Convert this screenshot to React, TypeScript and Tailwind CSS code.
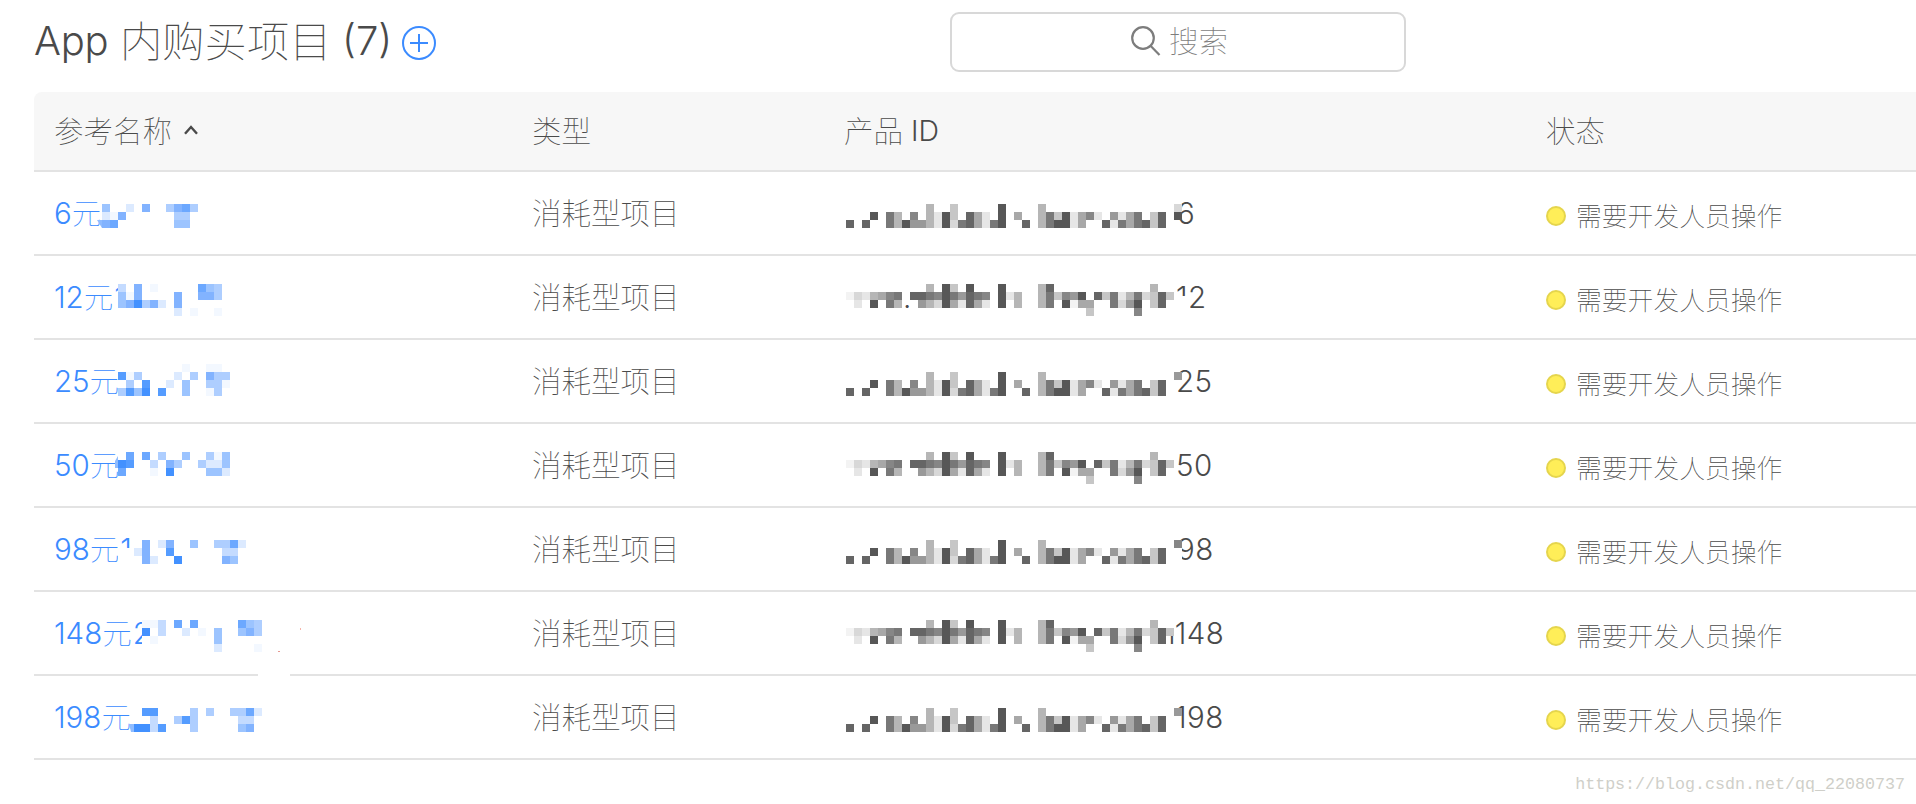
import clsx from "clsx";

const CELL = 8;

// "." leaves a hole, "w" paints white over whatever sits underneath
const GRAYS: Record<string, string> = {
  "5": "#575757", "6": "#656565", "7": "#787878", "8": "#868686", "9": "#999999",
  a: "#a8a8a8", b: "#b6b6b6", c: "#c6c6c6", d: "#d8d8d8", e: "#e6e6e6", f: "#f3f3f3", w: "#ffffff",
};

const BLUES: Record<string, string> = {
  "1": "#f3f8ff", "2": "#dceaff", "3": "#c4dbff", "4": "#aeceff", "5": "#9cc4ff",
  "6": "#82b3ff", "7": "#6ca8ff", "8": "#559cff", "9": "#4391ff", w: "#ffffff",
};

interface MosaicProps {
  rows: string[];
  palette: Record<string, string>;
  x: number;
  y: number;
  sliver?: string;
}

function Mosaic({ rows, palette, x, y, sliver }: MosaicProps) {
  const cols = Math.max(...rows.map((r) => r.length));
  return (
    <svg
      className="absolute overflow-visible"
      style={{ left: x, top: y }}
      width={cols * CELL}
      height={rows.length * CELL}
      shapeRendering="crispEdges"
      aria-hidden
    >
      {sliver && <path d={sliver} fill="#8fbcff" shapeRendering="auto" />}
      {rows.flatMap((row, r) =>
        [...row].map((c, i) =>
          palette[c] ? (
            <rect key={`${r}-${i}`} x={i * CELL} y={r * CELL} width={CELL} height={CELL} fill={palette[c]} />
          ) : null,
        ),
      )}
    </svg>
  );
}

const idOdd = [
  "..........b..c.....5....b................",
  "...5.7b.8.be5c.6ae.5.a..b7c5ea8e.9ea7.c6.",
  "6.6..7b599be5d76ae75..6.b755ea..6e7a76c6.",
];

const idEven = [
  "..........b.5c.5...5....b6............b",
  "fdeba87.6678579678.5eb..b7c895.6c7eb7dc6c",
  ".e.5.7b..9bd5ae6ae.5.b..b7.5faa..7d95.c6",
  "..............................c.....8",
];

interface Product {
  amount: string;
  tail?: string;
  nameX: number;
  nameY: number;
  name: string[];
  sliver?: string;
  suffix: string;
  suffixX: number;
  idEnd: string[];
}

const products: Product[] = [
  {
    amount: "6", nameX: 48, nameY: 32,
    name: ["5..2.6..4674", "216......44", "67.......55"], sliver: "M-5 16H0v8z",
    suffix: "6", suffixX: 333, idEnd: ["d", "5", "."],
  },
  {
    amount: "12", tail: "1", nameX: 64, nameY: 28,
    name: ["3w6.1.....754", "516....6..664", "569462.6", ".......2.1..1"],
    suffix: "12", suffixX: 332, idEnd: [".", "ww", "ww"],
  },
  {
    amount: "25", nameX: 64, nameY: 24,
    name: ["........1..11", "814....2.4.644", ".4.8..2.5..441", "4859.8..5..14"],
    suffix: "25", suffixX: 332, idEnd: ["9", ".", "."],
  },
  {
    amount: "50", nameX: 64, nameY: 28,
    name: [".7.7.4..5..415", "98..3.64..4225", "7...1.9....552"], sliver: "M-3 9L0 4v12h-3z",
    suffix: "50", suffixX: 332, idEnd: [],
  },
  {
    amount: "98", tail: "1", nameX: 64, nameY: 32,
    name: ["..w6.26..5..4472", ".w26..8......33", "ww.62..9.....65"],
    suffix: "98", suffixX: 333, idEnd: ["8", "w", "w"],
  },
  {
    amount: "148", tail: "2", nameX: 88, nameY: 28,
    name: ["113.7.7.....754", "9w3..2.1.5..564", "w1.......5", ".........2....1"],
    suffix: "n148", suffixX: 314, idEnd: [],
  },
  {
    amount: "198", nameX: 80, nameY: 32,
    name: [".88....4.4..4472", "..3..484.....33", "9938...4.....56"], sliver: "M-5 16H0v8h-3z",
    suffix: "198", suffixX: 331, idEnd: ["9", ".", "."],
  },
];

const columns = "grid grid-cols-[478px_312px_702px_1fr] pl-5";
const han = "font-['Noto_Sans_CJK_SC',sans-serif] font-thin";
const latin = "font-['Inter',sans-serif] font-light";

function Toolbar() {
  return (
    <header className="flex h-[92px] items-start pl-[34px]">
      <div className="flex h-[86px] w-[916px] items-center">
        <h1 className="flex items-center text-[40px] leading-[50px] text-[#4a4a4a]">
          <span className={clsx(latin, "w-[86px] pb-1 tracking-[-0.3px]")}>App</span>
          <span className={clsx(han, "w-[222px] pb-2 text-[42.3px]")}>内购买项目</span>
          <span className={clsx(latin, "w-[60px] pb-1")}>(7)</span>
        </h1>
        <svg width="34" height="34" viewBox="0 0 34 34" fill="none" stroke="#3b8bff" strokeWidth="2">
          <circle cx="17" cy="17" r="16" />
          <path d="M17 8v18M8 17h18" />
        </svg>
      </div>
      <div className="mt-3 flex h-[60px] w-[456px] items-center justify-center gap-2 rounded-[9px] border-2 border-[#d8d8d8] pl-0.5">
        <svg className="-mt-0.5" width="31" height="30" viewBox="0 0 31 30" fill="none" stroke="#7d7d7d" strokeWidth="2.2">
          <circle cx="13" cy="12" r="10.8" />
          <path d="M20.5 19.8l9 9.2" />
        </svg>
        <span className={clsx(han, "pb-1.5 text-[29.5px] leading-10 text-[#7d7d7d]")}>搜索</span>
      </div>
    </header>
  );
}

function TableHead() {
  return (
    <div
      className={clsx(
        columns,
        han,
        "h-20 items-center rounded-tl-lg border-b-2 border-[#e3e3e3] bg-[#f7f7f7] pb-1 text-[29.5px] leading-10 text-[#4a4a4a]",
      )}
    >
      <div className="flex items-center">
        参考名称
        <svg className="ml-3 mt-0.5" width="14" height="10" viewBox="0 0 14 10" fill="none" stroke="#4a4a4a" strokeWidth="2.4">
          <path d="M1 8.7L7 2l6 6.7" />
        </svg>
      </div>
      <div>类型</div>
      <div className="flex items-center">
        产品<span className={clsx(latin, "ml-2 pt-1 text-[28.5px]")}>ID</span>
      </div>
      <div>状态</div>
    </div>
  );
}

function ProductRow({ product, index }: { product: Product; index: number }) {
  const even = index % 2 === 1;
  return (
    <div
      className={clsx(
        columns,
        "relative h-[84px] border-b-2 border-[#e3e3e3] text-[29.5px] leading-[82px] text-[#4a4a4a]",
      )}
    >
      <div className="relative flex text-[#3b8bff]">
        <span className={latin}>{product.amount}</span>
        <span className={clsx(han, "leading-[78px]")}>元</span>
        {product.tail && <span className={clsx(latin, "ml-px")}>{product.tail}</span>}
        <Mosaic rows={product.name} palette={BLUES} x={product.nameX} y={product.nameY} sliver={product.sliver} />
      </div>
      <div className={clsx(han, "leading-[78px]")}>消耗型项目</div>
      <div className="relative">
        {index === 1 && <span className={clsx(latin, "absolute top-0 left-[59px]")}>.</span>}
        <span className={clsx(latin, "absolute top-0 tracking-[0.5px]")} style={{ left: product.suffixX }}>
          {product.suffix}
        </span>
        <Mosaic rows={even ? idEven : idOdd} palette={GRAYS} x={2} y={even ? 28 : 32} />
        {product.idEnd.length > 0 && <Mosaic rows={product.idEnd} palette={GRAYS} x={330} y={32} />}
      </div>
      <div className="flex items-center gap-2.5 pt-1.5">
        <span className="size-5 rounded-full border-2 border-[#e5d54d] bg-[#ffee58]" />
        <span className={clsx(han, "pb-0.5 text-[25.8px] leading-10")}>需要开发人员操作</span>
      </div>
      {index === 5 && (
        <>
          <span className="absolute -bottom-0.5 left-[224px] h-0.5 w-8 bg-white" />
          <span className="absolute top-[59px] left-[244px] h-px w-0.5 bg-[#e79a92]" />
          <span className="absolute top-9 left-[266px] h-0.5 w-px bg-[#f6b3a8]" />
        </>
      )}
    </div>
  );
}

export default function App() {
  return (
    <div className="h-[804px] w-[1916px] overflow-hidden bg-white">
      <Toolbar />
      <main className="ml-[34px]">
        <TableHead />
        {products.map((product, i) => (
          <ProductRow key={product.amount} product={product} index={i} />
        ))}
      </main>
      <footer className="flex justify-end pt-[13px] pr-[11px] font-['Liberation_Mono',monospace] text-[16.67px] leading-6 text-[#cfcfc9]">
        https://blog.csdn.net/qq_22080737
      </footer>
    </div>
  );
}
